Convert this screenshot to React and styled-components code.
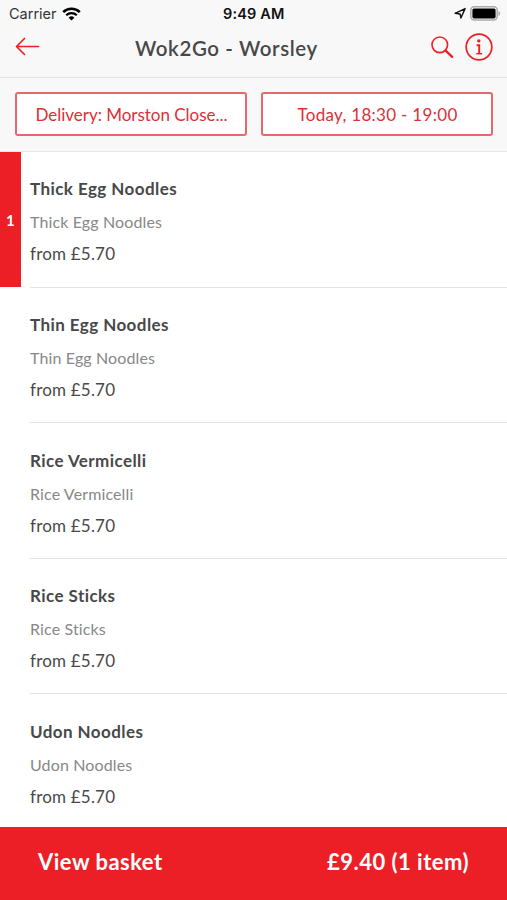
import React from "react";
import styled, { createGlobalStyle } from "styled-components";

const RED = "#ec1f26";

const noodles = [
  { name: "Thick Egg Noodles", price: "from £5.70", count: 1 },
  { name: "Thin Egg Noodles", price: "from £5.70" },
  { name: "Rice Vermicelli", price: "from £5.70" },
  { name: "Rice Sticks", price: "from £5.70" },
  { name: "Udon Noodles", price: "from £5.70" }
];

const WifiIcon = () => (
  <svg width="19" height="14" viewBox="0 0 19 14" fill="none" stroke="#000">
    <path d="M1.2 5.1a12 12 0 0 1 16.6 0" strokeWidth="2.6" />
    <path d="M4.2 8.2a7.6 7.6 0 0 1 10.6 0" strokeWidth="2.3" />
    <path d="M9.5 13.6 6.6 10.7a4.1 4.1 0 0 1 5.8 0z" fill="#000" stroke="none" />
  </svg>
);

const LocationIcon = () => (
  <svg width="13" height="13" viewBox="0 0 13 13" fill="none">
    <path
      d="M1.1 6.3 11.1 1.6 6.9 11 6.1 7z"
      stroke="#111"
      strokeWidth="1.4"
      strokeLinejoin="round"
    />
  </svg>
);

const BatteryIcon = () => (
  <svg width="31" height="15" viewBox="0 0 31 15">
    <rect x="0.8" y="0.8" width="26.4" height="13.2" rx="3.4" fill="#f8f8f8" stroke="#aaa" strokeWidth="1.5" />
    <rect x="2.4" y="2.4" width="23.2" height="10" rx="1.6" fill="#000" />
    <path d="M28.5 5v4.8c1-.4 1.7-1.3 1.7-2.4S29.5 5.4 28.5 5z" fill="#aaa" />
  </svg>
);

const BackIcon = () => (
  <svg width="26" height="20" viewBox="0 0 26 20" fill="none" stroke={RED} strokeWidth="1.7">
    <path d="M23.5 9.5H1.8M9.5 1.5l-8 8 8 8" strokeLinecap="round" strokeLinejoin="round" />
  </svg>
);

const SearchIcon = () => (
  <svg width="23" height="23" viewBox="0 0 23 23" fill="none" stroke={RED}>
    <circle cx="8.8" cy="8.8" r="7.8" strokeWidth="1.6" />
    <path d="m14.4 14.4 6.8 6.4" strokeWidth="2.3" strokeLinecap="round" />
  </svg>
);

const InfoIcon = () => (
  <svg width="28" height="28" viewBox="0 0 28 28" fill="none" stroke={RED}>
    <circle cx="14" cy="14" r="12.8" strokeWidth="1.7" />
    <circle cx="13.8" cy="7.9" r="1.7" fill={RED} stroke="none" />
    <path d="M11.6 12.2h2.6v8.3" strokeWidth="1.9" />
    <path d="M11.3 20.7h5.8" strokeWidth="1.5" />
  </svg>
);

const App = () => {
  return (
    <Screen>
      <GlobalStyle />
      <StatusBar>
        <Carrier>
          Carrier
          <WifiIcon />
        </Carrier>
        <Clock>9:49 AM</Clock>
        <Indicators>
          <LocationIcon />
          <BatteryIcon />
        </Indicators>
      </StatusBar>
      <NavBar>
        <NavButton aria-label="Back">
          <BackIcon />
        </NavButton>
        <Title>Wok2Go - Worsley</Title>
        <NavActions>
          <NavButton aria-label="Search">
            <SearchIcon />
          </NavButton>
          <NavButton aria-label="Info">
            <InfoIcon />
          </NavButton>
        </NavActions>
      </NavBar>
      <Filters>
        <FilterButton $gap={-0.02}>Delivery: Morston Close...</FilterButton>
        <FilterButton $gap={0.3}>Today, 18:30 - 19:00</FilterButton>
      </Filters>
      <Menu>
        {noodles.map(item => (
          <MenuItem key={item.name}>
            <Quantity $active={!!item.count}>{item.count}</Quantity>
            <Details>
              <Name>{item.name}</Name>
              <Description>{item.name}</Description>
              <Price>{item.price}</Price>
            </Details>
          </MenuItem>
        ))}
      </Menu>
      <Basket>
        <BasketText>View basket</BasketText>
        <BasketText>£9.40 (1 item)</BasketText>
      </Basket>
    </Screen>
  );
};

const GlobalStyle = createGlobalStyle`
  * {
    box-sizing: border-box;
  }
  body {
    margin: 0;
    background: #fff;
  }
  svg {
    display: block;
    flex: none;
  }
`;

const Screen = styled.div`
  width: 507px;
  height: 900px;
  display: flex;
  flex-direction: column;
  overflow: hidden;
  background: #fff;
  color: #484848;
  font-family: Lato, "Open Sans", sans-serif;
  white-space: nowrap;
`;

const StatusBar = styled.div`
  flex: none;
  height: 27px;
  padding: 0 6px 0 9px;
  display: grid;
  grid-template-columns: 214px auto 1fr;
  align-items: center;
  background: #f8f8f8;
  color: #111;
  font-family: Inter, "Liberation Sans", sans-serif;
  font-size: 14.5px;
`;

const Carrier = styled.div`
  display: flex;
  align-items: center;
  gap: 5px;
  color: #333;
`;

const Clock = styled.div`
  font-weight: 600;
  letter-spacing: 0.15px;
`;

const Indicators = styled.div`
  display: flex;
  align-items: center;
  justify-content: flex-end;
  gap: 3px;
`;

const NavBar = styled.div`
  flex: none;
  height: 51px;
  padding: 0 14px 10px 15px;
  display: grid;
  grid-template-columns: 120px auto 1fr;
  align-items: center;
  background: #f8f8f8;
  border-bottom: 1px solid #e2e2e2;
`;

const NavButton = styled.button`
  border: 0;
  padding: 0;
  background: none;
  display: flex;
`;

const NavActions = styled.div`
  display: flex;
  align-items: center;
  justify-content: flex-end;
  gap: 11px;
`;

const Title = styled.div`
  padding-top: 1px;
  font-size: 20.5px;
  font-weight: 600;
  letter-spacing: 0.6px;
`;

const Filters = styled.div`
  flex: none;
  height: 74px;
  padding: 14px 14px 15px 15px;
  display: grid;
  grid-template-columns: 1fr 1fr;
  gap: 14px;
  background: #f8f8f8;
  border-bottom: 1px solid #e9e9e9;
`;

const FilterButton = styled.button`
  padding: 0 0 0 1px;
  border: 2px solid #e5686c;
  border-radius: 3px;
  background: #fff;
  color: #dc3038;
  font-family: inherit;
  font-size: 17px;
  letter-spacing: ${props => props.$gap}px;
`;

const Menu = styled.div`
  flex: 1;
  min-height: 0;
  overflow: hidden;
`;

const MenuItem = styled.div`
  height: 135.6px;
  display: flex;
  gap: 9.5px;
`;

const Quantity = styled.div`
  flex: none;
  width: 20.5px;
  height: 135px;
  display: flex;
  align-items: center;
  justify-content: center;
  background: ${props => (props.$active ? RED : "transparent")};
  color: #fff;
  font-size: 15px;
  font-weight: 700;
`;

const Details = styled.div`
  flex: 1;
  padding-top: 25.4px;
  border-bottom: 1px solid #e3e3e3;
`;

const Name = styled.div`
  font-size: 17px;
  line-height: 23px;
  font-weight: 700;
  letter-spacing: 0.43px;
`;

const Description = styled.div`
  margin-top: 11px;
  font-size: 16px;
  line-height: 22px;
  color: #888;
  letter-spacing: 0.13px;
`;

const Price = styled.div`
  margin-top: 9px;
  font-size: 17px;
  line-height: 23px;
  letter-spacing: 0.2px;
`;

const Basket = styled.div`
  flex: none;
  height: 73px;
  padding: 0 38px 4px;
  display: flex;
  align-items: center;
  justify-content: space-between;
  background: ${RED};
  color: #fff;
`;

const BasketText = styled.div`
  font-size: 22px;
  font-weight: 700;
  letter-spacing: 0.48px;
`;

export default App;
